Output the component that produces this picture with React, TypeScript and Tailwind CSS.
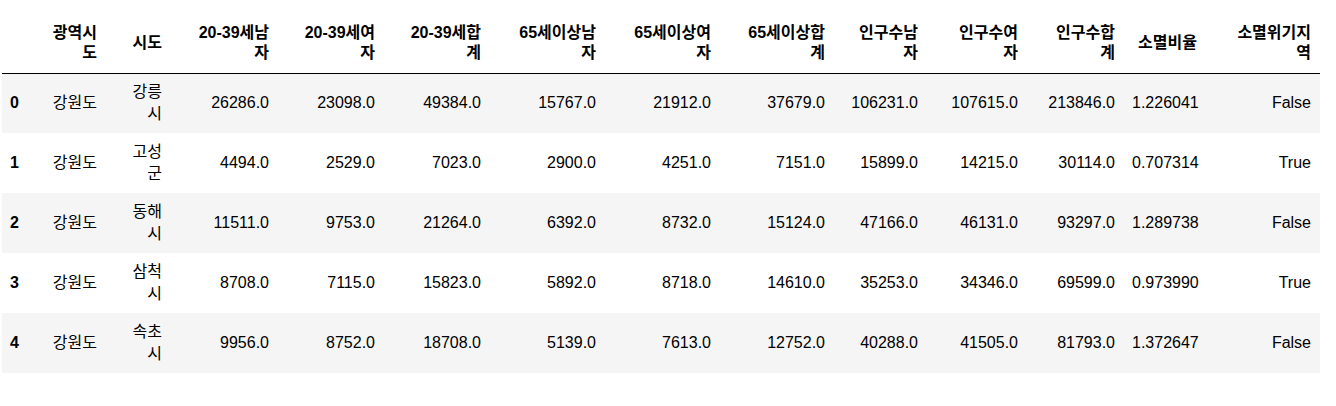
const columns: { label: string[]; width: number }[] = [
  { label: [''], width: 42 },
  { label: ['광역시', '도'], width: 62 },
  { label: ['시도'], width: 65 },
  { label: ['20-39세남', '자'], width: 107 },
  { label: ['20-39세여', '자'], width: 106 },
  { label: ['20-39세합', '계'], width: 106 },
  { label: ['65세이상남', '자'], width: 115 },
  { label: ['65세이상여', '자'], width: 115 },
  { label: ['65세이상합', '계'], width: 114 },
  { label: ['인구수남', '자'], width: 93 },
  { label: ['인구수여', '자'], width: 100 },
  { label: ['인구수합', '계'], width: 97 },
  { label: ['소멸비율'], width: 82 },
  { label: ['소멸위기지', '역'], width: 114 },
];

const rows: (string | string[])[][] = [
  ['0', '강원도', ['강릉', '시'], '26286.0', '23098.0', '49384.0', '15767.0', '21912.0', '37679.0', '106231.0', '107615.0', '213846.0', '1.226041', 'False'],
  ['1', '강원도', ['고성', '군'], '4494.0', '2529.0', '7023.0', '2900.0', '4251.0', '7151.0', '15899.0', '14215.0', '30114.0', '0.707314', 'True'],
  ['2', '강원도', ['동해', '시'], '11511.0', '9753.0', '21264.0', '6392.0', '8732.0', '15124.0', '47166.0', '46131.0', '93297.0', '1.289738', 'False'],
  ['3', '강원도', ['삼척', '시'], '8708.0', '7115.0', '15823.0', '5892.0', '8718.0', '14610.0', '35253.0', '34346.0', '69599.0', '0.973990', 'True'],
  ['4', '강원도', ['속초', '시'], '9956.0', '8752.0', '18708.0', '5139.0', '7613.0', '12752.0', '40288.0', '41505.0', '81793.0', '1.372647', 'False'],
];

function Lines({ parts }: { parts: string[] }) {
  return (
    <>
      {parts.map((p, i) => (
        <div key={i}>{p}</div>
      ))}
    </>
  );
}

export default function App() {
  return (
    <div
      className="w-[1336px] h-[406px] bg-white text-black text-[16px]"
      style={{ fontFamily: '"Liberation Sans", "Noto Sans CJK KR", sans-serif' }}
    >
      <table className="table-fixed border-collapse ml-[2px] mt-[13px] w-[1318px]">
        <colgroup>
          {columns.map((c, i) => (
            <col key={i} style={{ width: c.width }} />
          ))}
        </colgroup>
        <thead>
          <tr className="h-[60px] border-b border-black">
            {columns.map((c, i) => (
              <th
                key={i}
                className={`align-middle font-bold leading-[20px] pl-2 pr-[9px] ${i === 0 ? 'text-left' : 'text-right'}`}
              >
                <Lines parts={c.label} />
              </th>
            ))}
          </tr>
        </thead>
        <tbody>
          {rows.map((r, ri) => (
            <tr key={ri} className={`h-[60px] ${ri % 2 === 0 ? 'bg-[#f5f5f5]' : 'bg-white'}`}>
              {r.map((cell, ci) =>
                ci === 0 ? (
                  <th key={ci} className="align-middle text-left font-bold pl-2 pr-[9px] leading-[22px]">
                    {cell}
                  </th>
                ) : (
                  <td key={ci} className="align-middle text-right pl-2 pr-[9px] leading-[22px]">
                    {Array.isArray(cell) ? <Lines parts={cell} /> : cell}
                  </td>
                )
              )}
            </tr>
          ))}
        </tbody>
      </table>
    </div>
  );
}
